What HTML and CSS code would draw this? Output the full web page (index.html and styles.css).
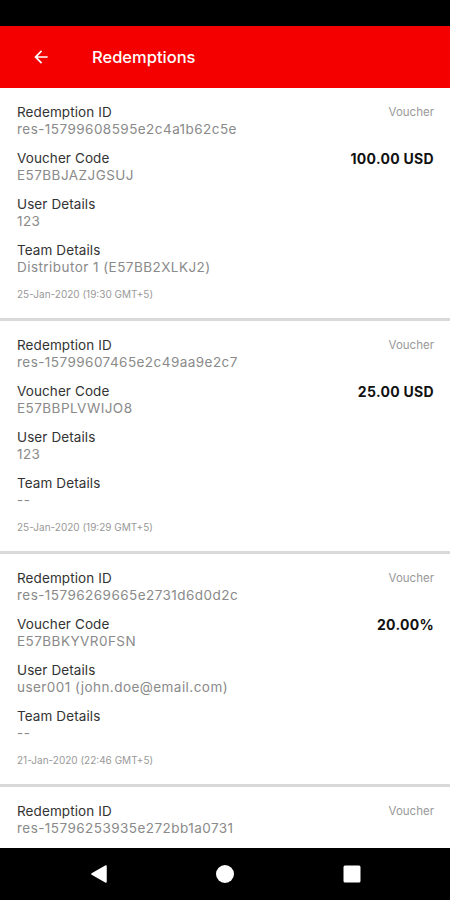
FILE: index.html
```html
<!DOCTYPE html>
<html lang="en">
<head>
    <meta charset="UTF-8">
    <meta name="viewport" content="width=device-width, initial-scale=1.0">
    <title>Redemptions</title>
    <link rel="stylesheet" href="styles.css">
</head>
<body>
    <div class="phone">
        <div class="status-bar"></div>
        <header class="app-bar">
            <svg class="back" width="20" height="20" viewBox="0 0 24 24">
                <path d="M20 11H7.83l5.59-5.59L12 4l-8 8 8 8 1.41-1.41L7.83 13H20v-2z" fill="#fff"/>
            </svg>
            <h1 class="title">Redemptions</h1>
        </header>
        <main class="list">
            <div class="card">
                <div class="row">
                    <div class="field">
                        <p class="label">Redemption ID</p>
                        <p class="value">res-15799608595e2c4a1b62c5e</p>
                    </div>
                    <span class="type">Voucher</span>
                </div>
                <div class="row">
                    <div class="field">
                        <p class="label">Voucher Code</p>
                        <p class="value">E57BBJAZJGSUJ</p>
                    </div>
                    <span class="amount">100.00 USD</span>
                </div>
                <div class="field">
                    <p class="label">User Details</p>
                    <p class="value">123</p>
                </div>
                <div class="field">
                    <p class="label">Team Details</p>
                    <p class="value">Distributor 1 (E57BB2XLKJ2)</p>
                </div>
                <p class="date">25-Jan-2020 (19:30 GMT+5)</p>
            </div>
            <div class="card">
                <div class="row">
                    <div class="field">
                        <p class="label">Redemption ID</p>
                        <p class="value">res-15799607465e2c49aa9e2c7</p>
                    </div>
                    <span class="type">Voucher</span>
                </div>
                <div class="row">
                    <div class="field">
                        <p class="label">Voucher Code</p>
                        <p class="value">E57BBPLVWIJO8</p>
                    </div>
                    <span class="amount">25.00 USD</span>
                </div>
                <div class="field">
                    <p class="label">User Details</p>
                    <p class="value">123</p>
                </div>
                <div class="field">
                    <p class="label">Team Details</p>
                    <p class="value">--</p>
                </div>
                <p class="date">25-Jan-2020 (19:29 GMT+5)</p>
            </div>
            <div class="card">
                <div class="row">
                    <div class="field">
                        <p class="label">Redemption ID</p>
                        <p class="value">res-15796269665e2731d6d0d2c</p>
                    </div>
                    <span class="type">Voucher</span>
                </div>
                <div class="row">
                    <div class="field">
                        <p class="label">Voucher Code</p>
                        <p class="value">E57BBKYVR0FSN</p>
                    </div>
                    <span class="amount">20.00%</span>
                </div>
                <div class="field">
                    <p class="label">User Details</p>
                    <p class="value">user001 (john.doe@email.com)</p>
                </div>
                <div class="field">
                    <p class="label">Team Details</p>
                    <p class="value">--</p>
                </div>
                <p class="date">21-Jan-2020 (22:46 GMT+5)</p>
            </div>
            <div class="card">
                <div class="row">
                    <div class="field">
                        <p class="label">Redemption ID</p>
                        <p class="value">res-15796253935e272bb1a0731</p>
                    </div>
                    <span class="type">Voucher</span>
                </div>
            </div>
        </main>
        <nav class="nav-bar">
            <svg width="16" height="18" viewBox="0 0 16 18"><path d="M15 1 L1 9 L15 17 Z" fill="#fff" stroke="#fff" stroke-linejoin="round" stroke-width="1.5"/></svg>
            <svg width="20" height="20" viewBox="0 0 20 20"><circle cx="10" cy="10" r="9" fill="#fff"/></svg>
            <svg width="18" height="18" viewBox="0 0 18 18"><rect x="0.5" y="0.5" width="17" height="17" rx="1.5" fill="#fff"/></svg>
        </nav>
    </div>
</body>
</html>
```
FILE: styles.css
```css
* {
    margin: 0;
    padding: 0;
    box-sizing: border-box;
}
body {
    background-color: #fff;
    font-family: 'Inter', 'Open Sans', sans-serif;
}
.phone {
    width: 450px;
    height: 900px;
    display: flex;
    flex-direction: column;
    overflow: hidden;
}
.status-bar {
    height: 26px;
    background-color: #000;
}
.app-bar {
    height: 62px;
    background-color: #f50000;
    display: flex;
    align-items: center;
    padding-left: 31px;
    gap: 41px;
}
.title {
    color: #fff;
    font-size: 16.5px;
    font-weight: 500;
}
.list {
    flex: 1;
    overflow: hidden;
}
.card {
    padding: 16px 16px 18px 17px;
    border-bottom: 3px solid #d9d9d9;
}
.row {
    display: flex;
    justify-content: space-between;
    align-items: flex-start;
}
.field {
    margin-bottom: 12px;
}
.label, .value {
    font-size: 13.5px;
    line-height: 17px;
}
.label {
    color: #333;
    letter-spacing: 0.1px;
}
.value {
    color: #8a8a8a;
    letter-spacing: 0.45px;
}
.type {
    font-size: 11.5px;
    line-height: 17px;
    color: #999;
}
.amount {
    font-size: 14px;
    line-height: 17px;
    font-weight: 700;
    letter-spacing: 0.3px;
    color: #111;
}
.date {
    font-size: 10px;
    line-height: 12px;
    color: #999;
}
.nav-bar {
    height: 52px;
    background-color: #000;
    display: flex;
    align-items: center;
    justify-content: space-between;
    padding: 0 89px 0 91px;
}
```
